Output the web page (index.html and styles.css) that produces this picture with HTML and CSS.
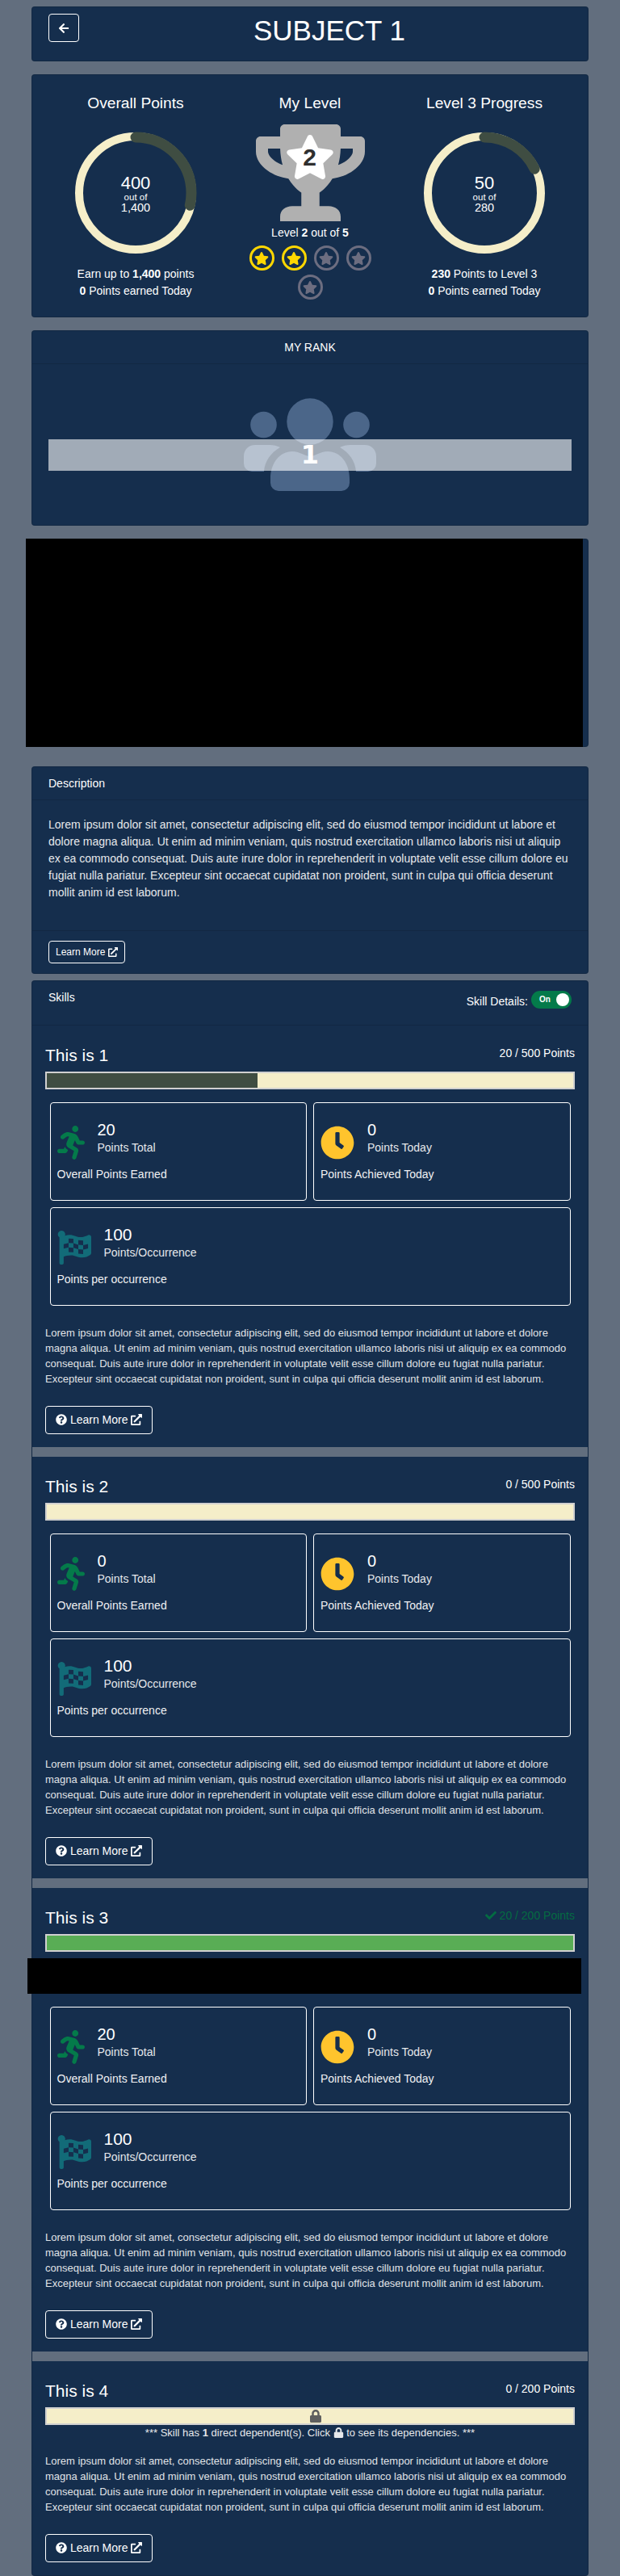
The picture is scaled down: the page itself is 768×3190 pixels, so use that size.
FILE: index.html
```html
<!DOCTYPE html>
<html>
  <head>
    <title>Subject 1</title>
    <link rel="stylesheet" href="styles.css">
  </head>
  <body>
    <svg class="defs">
      <symbol id="i-back" viewBox="0 0 448 512"><path d="M257.5 445.1l-22.2 22.2c-9.4 9.4-24.6 9.4-33.9 0L7 273c-9.4-9.4-9.4-24.6 0-33.9L201.4 44.7c9.4-9.4 24.6-9.4 33.9 0l22.2 22.2c9.5 9.5 9.3 25-.4 34.3L136.6 216H424c13.3 0 24 10.7 24 24v32c0 13.3-10.7 24-24 24H136.6l120.5 114.8c9.8 9.3 10 24.8.4 34.3z"/></symbol>
      <symbol id="i-star" viewBox="0 0 576 512"><path d="M259.3 17.8L194 150.2 47.9 171.5c-26.2 3.8-36.7 36.1-17.7 54.6l105.7 103-25 145.5c-4.5 26.3 23.2 46 46.4 33.7L288 439.6l130.7 68.7c23.2 12.2 50.9-7.4 46.4-33.7l-25-145.5 105.7-103c19-18.5 8.5-50.8-17.7-54.6L382 150.2 316.7 17.8c-11.7-23.6-45.6-24-57.4 0z"/></symbol>
      <symbol id="i-ext" viewBox="0 0 512 512"><path d="M432,320H400a16,16,0,0,0-16,16V448H64V128H208a16,16,0,0,0,16-16V80a16,16,0,0,0-16-16H48A48,48,0,0,0,0,112V464a48,48,0,0,0,48,48H400a48,48,0,0,0,48-48V336A16,16,0,0,0,432,320ZM488,0h-128c-21.37,0-32.05,25.91-17,41l35.73,35.73L135,320.37a24,24,0,0,0,0,34L157.67,377a24,24,0,0,0,34,0L435.28,133.32,471,169c15,15,41,4.5,41-17V24A24,24,0,0,0,488,0Z"/></symbol>
      <symbol id="i-help" viewBox="0 0 512 512"><path d="M504 256c0 136.997-111.043 248-248 248S8 392.997 8 256C8 119.083 119.043 8 256 8s248 111.083 248 248zM262.655 90c-54.497 0-89.255 22.957-116.549 63.758-3.536 5.286-2.353 12.415 2.715 16.258l34.699 26.31c5.205 3.947 12.621 3.008 16.665-2.122 17.864-22.658 30.113-35.797 57.303-35.797 20.429 0 45.698 13.148 45.698 32.958 0 14.976-12.363 22.667-32.534 33.976C247.128 238.528 216 254.941 216 296v4c0 6.627 5.373 12 12 12h56c6.627 0 12-5.373 12-12v-1.333c0-28.462 83.186-29.647 83.186-106.667 0-58.002-60.165-102-116.531-102zM256 338c-25.365 0-46 20.635-46 46 0 25.364 20.635 46 46 46s46-20.636 46-46c0-25.365-20.635-46-46-46z"/></symbol>
      <symbol id="i-run" viewBox="0 0 416 512"><path d="M272 96c26.51 0 48-21.49 48-48S298.51 0 272 0s-48 21.49-48 48 21.49 48 48 48zM113.69 317.47l-14.8 34.52H32c-17.67 0-32 14.33-32 32s14.33 32 32 32h77.45c19.25 0 36.58-11.44 44.11-29.09l8.79-20.52-10.67-6.3c-17.32-10.23-30.06-25.37-37.99-42.61zM384 223.99h-44.03l-26.06-53.25c-12.5-25.55-35.45-44.23-61.78-50.94l-71.08-21.14c-28.3-6.8-57.77-.55-80.84 17.14l-39.67 30.41c-14.03 10.75-16.69 30.83-5.92 44.86s30.84 16.66 44.86 5.92l39.69-30.41c7.67-5.89 17.44-8 25.27-6.14l14.7 4.37-37.46 87.39c-12.62 29.48-1.31 64.01 26.3 80.31l84.98 50.17-27.47 87.73c-5.28 16.86 4.11 34.81 20.97 40.09 3.19 1 6.41 1.48 9.58 1.48 13.61 0 26.23-8.77 30.52-22.45l31.64-101.06c5.91-20.77-2.89-43.08-21.64-54.39l-61.24-36.14 31.31-78.28 20.27 41.43c8 16.34 24.92 26.89 43.11 26.89H384c17.67 0 32-14.33 32-32s-14.33-31.99-32-31.99z"/></symbol>
      <symbol id="i-clock" viewBox="0 0 512 512"><path d="M256,8C119,8,8,119,8,256S119,504,256,504,504,393,504,256,393,8,256,8Zm92.49,313h0l-20,25a16,16,0,0,1-22.49,2.5h0l-67-49.72a40,40,0,0,1-15-31.23V112a16,16,0,0,1,16-16h32a16,16,0,0,1,16,16V256l58,42.5A16,16,0,0,1,348.49,321Z"/></symbol>
      <symbol id="i-flag" viewBox="0 0 512 512"><path fill-rule="evenodd" d="M466.5 66.9c-34.3 15.9-76.5 31.9-117 31.9C296 98.8 251.7 64 184.3 64c-25 0-47.3 4.4-68 12 2.8-7.5 4.1-15.5 3.6-23.6C118.1 24 94.8 1.2 66.3 0 34.3-1.3 8 24.3 8 56c0 19 9.5 35.8 24 45.9V488c0 13.3 10.7 24 24 24h16c13.3 0 24-10.7 24-24v-94.4c28.3-12.1 63.6-22.2 114.4-22.2 53.6 0 97.8 34.8 165.2 34.8 48.2 0 86.7-16.3 122.5-40.9 8.7-6 13.8-15.8 13.8-26.4V95.9c.1-23.3-24.2-38.8-45.4-29zM170 118L243 122V190L170 186zM317 144L390 150V218L317 212zM96 204L170 186V254L96 272zM243 190L317 212V280L243 258zM390 218L464 200V268L390 286zM170 254L243 258V326L170 322zM317 280L390 286V354L317 348z"/></symbol>
      <symbol id="i-lock" viewBox="0 0 448 512"><path d="M400 224h-24v-72C376 68.2 307.8 0 224 0S72 68.2 72 152v72H48c-26.5 0-48 21.5-48 48v192c0 26.5 21.5 48 48 48h352c26.5 0 48-21.5 48-48V272c0-26.5-21.5-48-48-48zm-104 0H152v-72c0-39.7 32.3-72 72-72s72 32.3 72 72v72z"/></symbol>
      <symbol id="i-check" viewBox="0 0 512 512"><path d="M173.898 439.404l-166.4-166.4c-9.997-9.997-9.997-26.206 0-36.204l36.203-36.204c9.997-9.998 26.207-9.998 36.204 0L192 312.69 432.095 72.596c9.997-9.997 26.207-9.997 36.204 0l36.203 36.204c9.997 9.997 9.997 26.206 0 36.204l-294.4 294.401c-9.998 9.997-26.207 9.997-36.204-.001z"/></symbol>
    </svg>

    <div class="card title-card">
      <a class="back-btn"><svg class="ico"><use href="#i-back"/></svg></a>
      <h1>SUBJECT 1</h1>
    </div>

    <div class="card overview">
      <div class="col">
        <h2>Overall Points</h2>
        <div class="ring">
          <svg viewBox="0 0 152 152">
            <circle class="ring-bg" cx="76" cy="76" r="70"/>
            <circle class="ring-val" cx="76" cy="76" r="69" pathLength="100" stroke-dasharray="28.57 100"/>
          </svg>
          <div class="ring-text">
            <span class="ring-num">400</span>
            <span class="ring-of">out of</span>
            <span class="ring-total">1,400</span>
          </div>
        </div>
        <p class="stat">Earn up to <b>1,400</b> points</p>
        <p class="stat"><b>0</b> Points earned Today</p>
      </div>
      <div class="col">
        <h2>My Level</h2>
        <div class="trophy">
          <svg viewBox="0 0 576 512"><path d="M552 64H448V24c0-13.3-10.7-24-24-24H152c-13.3 0-24 10.7-24 24v40H24C10.7 64 0 74.7 0 88v56c0 35.7 22.5 72.4 61.9 100.7 31.5 22.7 69.8 37.1 110 41.7C203.3 338.5 240 360 240 360v72h-48c-35.3 0-64 20.7-64 56v24h320v-24c0-35.3-28.7-56-64-56h-48v-72s36.7-21.5 68.1-73.6c40.3-4.6 78.7-19 110-41.7 39.3-28.3 61.9-65 61.9-100.7V88c0-13.3-10.7-24-24-24zM99.3 192.8C74.9 175.2 64 155.6 64 144v-16h64.2c1 32.6 5.8 61.2 12.8 86.2-15.1-5.2-29.2-12.4-41.7-21.4zM512 144c0 16.1-17.7 36.1-35.3 48.8-12.5 9-26.7 16.2-41.8 21.4 7-25 11.8-53.6 12.8-86.2H512v16z"/></svg>
          <div class="trophy-star">
            <svg class="ico-fill"><use href="#i-star"/></svg>
            <span>2</span>
          </div>
        </div>
        <p class="stat level-line">Level <b>2</b> out of <b>5</b></p>
        <div class="stars">
          <span class="star on"><svg><use href="#i-star"/></svg></span>
          <span class="star on"><svg><use href="#i-star"/></svg></span>
          <span class="star"><svg><use href="#i-star"/></svg></span>
          <span class="star"><svg><use href="#i-star"/></svg></span>
          <span class="star"><svg><use href="#i-star"/></svg></span>
        </div>
      </div>
      <div class="col">
        <h2>Level 3 Progress</h2>
        <div class="ring">
          <svg viewBox="0 0 152 152">
            <circle class="ring-bg" cx="76" cy="76" r="70"/>
            <circle class="ring-val" cx="76" cy="76" r="69" pathLength="100" stroke-dasharray="17.86 100"/>
          </svg>
          <div class="ring-text">
            <span class="ring-num">50</span>
            <span class="ring-of">out of</span>
            <span class="ring-total">280</span>
          </div>
        </div>
        <p class="stat"><b>230</b> Points to Level 3</p>
        <p class="stat"><b>0</b> Points earned Today</p>
      </div>
    </div>

    <div class="card rank-card">
      <div class="card-head center">MY RANK</div>
      <div class="rank-body">
        <svg class="rank-icon" viewBox="0 0 164 115">
          <circle cx="82" cy="29" r="28.7"/>
          <circle cx="24.5" cy="33" r="16.3"/>
          <circle cx="139.5" cy="33" r="16.3"/>
          <path d="M33 105V100C33 80 45 66 60 66C70 66 75 72 82 72C89 72 94 66 104 66C119 66 131 80 131 100V105A10 10 0 0 1 121 115H43A10 10 0 0 1 33 105Z"/>
          <path d="M0 80V72C0 64 6 58 14 58H32C37 58 41 59 45 61C33 68 26 78 25 91H10A10 10 0 0 1 0 81Z"/>
          <path d="M164 80V72C164 64 158 58 150 58H132C127 58 123 59 119 61C131 68 138 78 139 91H154A10 10 0 0 0 164 81Z"/>
        </svg>
        <div class="rank-bar">1</div>
      </div>
    </div>

    <div class="card video-card">
      <div class="video-mask"></div>
    </div>

    <div class="card desc-card">
      <div class="card-head">Description</div>
      <div class="desc-body">Lorem ipsum dolor sit amet, consectetur adipiscing elit, sed do eiusmod tempor incididunt ut labore et dolore magna aliqua. Ut enim ad minim veniam, quis nostrud exercitation ullamco laboris nisi ut aliquip ex ea commodo consequat. Duis aute irure dolor in reprehenderit in voluptate velit esse cillum dolore eu fugiat nulla pariatur. Excepteur sint occaecat cupidatat non proident, sunt in culpa qui officia deserunt mollit anim id est laborum.</div>
      <div class="desc-foot">
        <a class="btn btn-sm">Learn More <svg class="ico"><use href="#i-ext"/></svg></a>
      </div>
    </div>

    <div class="card skills-card">
      <div class="card-head skills-head">
        <span>Skills</span>
        <div class="details">
          <span class="details-label">Skill Details:</span>
          <span class="toggle"><span>On</span><i></i></span>
        </div>
      </div>

      <div class="skill">
        <div class="skill-head"><h3>This is 1</h3><span class="pts">20 / 500 Points</span></div>
        <div class="bar"><div class="bar-fill" style="width: 40%"></div></div>
        <div class="boxes">
          <div class="box">
            <div class="box-row">
              <svg class="box-icon run"><use href="#i-run"/></svg>
              <div><div class="box-num">20</div><div class="box-label">Points Total</div></div>
            </div>
            <div class="box-desc">Overall Points Earned</div>
          </div>
          <div class="box">
            <div class="box-row">
              <svg class="box-icon clock"><use href="#i-clock"/></svg>
              <div><div class="box-num">0</div><div class="box-label">Points Today</div></div>
            </div>
            <div class="box-desc">Points Achieved Today</div>
          </div>
          <div class="box wide">
            <div class="box-row">
              <svg class="box-icon flag"><use href="#i-flag"/></svg>
              <div><div class="box-num big">100</div><div class="box-label">Points/Occurrence</div></div>
            </div>
            <div class="box-desc">Points per occurrence</div>
          </div>
        </div>
        <p class="skill-text">Lorem ipsum dolor sit amet, consectetur adipiscing elit, sed do eiusmod tempor incididunt ut labore et dolore magna aliqua. Ut enim ad minim veniam, quis nostrud exercitation ullamco laboris nisi ut aliquip ex ea commodo consequat. Duis aute irure dolor in reprehenderit in voluptate velit esse cillum dolore eu fugiat nulla pariatur. Excepteur sint occaecat cupidatat non proident, sunt in culpa qui officia deserunt mollit anim id est laborum.</p>
        <a class="btn"><svg class="ico"><use href="#i-help"/></svg> Learn More <svg class="ico"><use href="#i-ext"/></svg></a>
      </div>
      <div class="sep"></div>

      <div class="skill">
        <div class="skill-head"><h3>This is 2</h3><span class="pts">0 / 500 Points</span></div>
        <div class="bar"></div>
        <div class="boxes">
          <div class="box">
            <div class="box-row">
              <svg class="box-icon run"><use href="#i-run"/></svg>
              <div><div class="box-num">0</div><div class="box-label">Points Total</div></div>
            </div>
            <div class="box-desc">Overall Points Earned</div>
          </div>
          <div class="box">
            <div class="box-row">
              <svg class="box-icon clock"><use href="#i-clock"/></svg>
              <div><div class="box-num">0</div><div class="box-label">Points Today</div></div>
            </div>
            <div class="box-desc">Points Achieved Today</div>
          </div>
          <div class="box wide">
            <div class="box-row">
              <svg class="box-icon flag"><use href="#i-flag"/></svg>
              <div><div class="box-num big">100</div><div class="box-label">Points/Occurrence</div></div>
            </div>
            <div class="box-desc">Points per occurrence</div>
          </div>
        </div>
        <p class="skill-text">Lorem ipsum dolor sit amet, consectetur adipiscing elit, sed do eiusmod tempor incididunt ut labore et dolore magna aliqua. Ut enim ad minim veniam, quis nostrud exercitation ullamco laboris nisi ut aliquip ex ea commodo consequat. Duis aute irure dolor in reprehenderit in voluptate velit esse cillum dolore eu fugiat nulla pariatur. Excepteur sint occaecat cupidatat non proident, sunt in culpa qui officia deserunt mollit anim id est laborum.</p>
        <a class="btn"><svg class="ico"><use href="#i-help"/></svg> Learn More <svg class="ico"><use href="#i-ext"/></svg></a>
      </div>
      <div class="sep"></div>

      <div class="skill">
        <div class="skill-head"><h3>This is 3</h3><span class="pts done"><svg class="ico"><use href="#i-check"/></svg> 20 / 200 Points</span></div>
        <div class="bar"><div class="bar-fill full" style="width: 100%"></div></div>
        <div class="skill-mask"></div>
        <div class="boxes">
          <div class="box">
            <div class="box-row">
              <svg class="box-icon run"><use href="#i-run"/></svg>
              <div><div class="box-num">20</div><div class="box-label">Points Total</div></div>
            </div>
            <div class="box-desc">Overall Points Earned</div>
          </div>
          <div class="box">
            <div class="box-row">
              <svg class="box-icon clock"><use href="#i-clock"/></svg>
              <div><div class="box-num">0</div><div class="box-label">Points Today</div></div>
            </div>
            <div class="box-desc">Points Achieved Today</div>
          </div>
          <div class="box wide">
            <div class="box-row">
              <svg class="box-icon flag"><use href="#i-flag"/></svg>
              <div><div class="box-num big">100</div><div class="box-label">Points/Occurrence</div></div>
            </div>
            <div class="box-desc">Points per occurrence</div>
          </div>
        </div>
        <p class="skill-text">Lorem ipsum dolor sit amet, consectetur adipiscing elit, sed do eiusmod tempor incididunt ut labore et dolore magna aliqua. Ut enim ad minim veniam, quis nostrud exercitation ullamco laboris nisi ut aliquip ex ea commodo consequat. Duis aute irure dolor in reprehenderit in voluptate velit esse cillum dolore eu fugiat nulla pariatur. Excepteur sint occaecat cupidatat non proident, sunt in culpa qui officia deserunt mollit anim id est laborum.</p>
        <a class="btn"><svg class="ico"><use href="#i-help"/></svg> Learn More <svg class="ico"><use href="#i-ext"/></svg></a>
      </div>
      <div class="sep"></div>

      <div class="skill">
        <div class="skill-head"><h3>This is 4</h3><span class="pts">0 / 200 Points</span></div>
        <div class="bar locked"><svg class="bar-lock"><use href="#i-lock"/></svg></div>
        <div class="dep-note">*** Skill has <b>1</b> direct dependent(s). Click <svg class="ico"><use href="#i-lock"/></svg> to see its dependencies. ***</div>
        <p class="skill-text">Lorem ipsum dolor sit amet, consectetur adipiscing elit, sed do eiusmod tempor incididunt ut labore et dolore magna aliqua. Ut enim ad minim veniam, quis nostrud exercitation ullamco laboris nisi ut aliquip ex ea commodo consequat. Duis aute irure dolor in reprehenderit in voluptate velit esse cillum dolore eu fugiat nulla pariatur. Excepteur sint occaecat cupidatat non proident, sunt in culpa qui officia deserunt mollit anim id est laborum.</p>
        <a class="btn"><svg class="ico"><use href="#i-help"/></svg> Learn More <svg class="ico"><use href="#i-ext"/></svg></a>
      </div>
    </div>
  </body>
</html>
```

FILE: styles.css
```css
body {
  margin: 0;
  padding: 8px 39px 0;
  background-color: #626e7e;
  color: #fff;
  font-family: 'Liberation Sans', Arial, sans-serif;
  font-size: 14px;
  line-height: 21px;
}
.defs {
  display: none;
}
.ico {
  width: 1em;
  height: 1em;
  fill: currentColor;
  vertical-align: -0.125em;
}
.card {
  background-color: #152e4d;
  border: 1px solid rgba(0, 0, 0, 0.125);
  border-radius: 4px;
  margin-bottom: 16px;
}
.card-head {
  padding: 10px 20px 9px;
  height: 21px;
  border-bottom: 1px solid rgba(0, 0, 0, 0.125);
}
.center {
  text-align: center;
}

/* title */
.title-card {
  display: flex;
  align-items: flex-start;
  padding: 8px 20px 16px;
}
.back-btn {
  width: 36px;
  height: 33px;
  border: 1px solid #fff;
  border-radius: 4px;
  display: flex;
  align-items: center;
  justify-content: center;
}
.title-card h1 {
  flex: 1;
  margin: 0;
  padding-left: 10px;
  font-size: 35px;
  line-height: 42px;
  font-weight: normal;
  text-align: center;
}

/* overview */
.overview {
  display: grid;
  grid-template-columns: repeat(3, 1fr);
  padding: 23px 20px 21px;
  text-align: center;
}
.overview h2 {
  margin: 0;
  font-size: 19.2px;
  line-height: 23px;
  font-weight: normal;
}
.stat {
  margin: 0;
}
.ring {
  position: relative;
  width: 152px;
  height: 152px;
  margin: 24px auto 14px;
}
.ring svg {
  display: block;
  transform: rotate(-90deg);
}
.ring-bg {
  fill: none;
  stroke: #f5eec9;
  stroke-width: 10;
}
.ring-val {
  fill: none;
  stroke: #3f4d42;
  stroke-width: 13;
  stroke-linecap: round;
}
.ring-text {
  position: absolute;
  top: 0;
  left: 0;
  width: 100%;
  height: 100%;
  padding-top: 2px;
  box-sizing: border-box;
  display: flex;
  flex-direction: column;
  justify-content: center;
}
.ring-num {
  font-size: 22px;
  line-height: 22px;
}
.ring-of {
  font-size: 11.5px;
  line-height: 12px;
}
.ring-total {
  font-size: 14.5px;
  line-height: 14px;
}
.trophy {
  position: relative;
  width: 135px;
  height: 120px;
  margin: 15px auto 4px;
  fill: #b0b0b0;
}
.trophy > svg {
  display: block;
}
.trophy-star {
  position: absolute;
  top: 13px;
  left: 36px;
  width: 62px;
  height: 55px;
  fill: #fff;
  color: #2f2f2f;
  font-size: 30px;
  font-weight: bold;
  line-height: 55px;
}
.trophy-star svg {
  position: absolute;
  top: 0;
  left: 0;
  width: 100%;
  height: 100%;
}
.trophy-star span {
  position: relative;
}
.level-line {
  margin-bottom: 5px;
}
.stars {
  width: 180px;
  margin: 0 auto;
  display: flex;
  flex-wrap: wrap;
  justify-content: center;
  row-gap: 5px;
}
.star {
  width: 31px;
  height: 31px;
  margin: 0 4.5px;
  box-sizing: border-box;
  border: 3px solid #6c6d80;
  border-radius: 50%;
  fill: #6c6d80;
  display: flex;
  align-items: center;
  justify-content: center;
}
.star svg {
  width: 18px;
  height: 16px;
}
.star.on {
  border-color: #ffd700;
  fill: #ffd700;
}

/* rank */
.rank-body {
  position: relative;
  height: 199px;
  display: flex;
  align-items: center;
  justify-content: center;
}
.rank-icon {
  width: 164px;
  height: 115px;
  fill: #4b6689;
}
.rank-bar {
  position: absolute;
  top: 93px;
  left: 20px;
  right: 20px;
  height: 39px;
  background: rgba(255, 255, 255, 0.6);
  text-align: center;
  font-family: 'DejaVu Sans', sans-serif;
  font-size: 32px;
  font-weight: bold;
  line-height: 39px;
}

/* video placeholder */
.video-card {
  height: 256px;
  margin-bottom: 24px;
}
.video-mask {
  width: 690px;
  height: 258px;
  margin: -1px 0 0 -8px;
  background: #000;
  position: relative;
}

/* description */
.desc-card {
  margin-bottom: 8px;
}
.desc-body {
  padding: 20px 20px 36px;
  color: #e6e8eb;
  border-bottom: 1px solid rgba(0, 0, 0, 0.125);
}
.desc-foot {
  padding: 12px 20px;
}
.btn {
  display: block;
  width: fit-content;
  border: 1px solid #fff;
  border-radius: 4px;
  padding: 6px 12px;
  line-height: 21px;
}
.btn-sm {
  padding: 4px 8px;
  font-size: 12px;
  line-height: 18px;
}

/* skills */
.skills-card {
  margin-bottom: 0;
}
.skills-head {
  display: flex;
  justify-content: space-between;
  height: 34px;
  padding-bottom: 10px;
}
.details {
  display: flex;
  gap: 4px;
  margin-top: 2px;
}
.details-label {
  margin-top: 3px;
}
.toggle {
  width: 50px;
  height: 22px;
  border-radius: 11px;
  background: #047a4a;
  display: flex;
  justify-content: space-between;
  padding: 3px 3px 3px 10px;
  box-sizing: border-box;
  font-size: 10px;
  font-weight: bold;
  line-height: 15px;
}
.toggle i {
  width: 16px;
  height: 16px;
  border-radius: 50%;
  background: #fff;
}
.skill {
  padding: 24px 16px 16px;
}
.skill-head {
  display: flex;
  justify-content: space-between;
  margin-bottom: 7px;
}
.skill-head h3 {
  margin: 0;
  font-size: 21px;
  line-height: 26px;
  font-weight: normal;
}
.pts.done {
  color: #046b42;
}
.bar {
  height: 22px;
  box-sizing: border-box;
  border: 2px solid #d0d0d0;
  background: #f5eec9;
  margin-bottom: 16px;
}
.bar-fill {
  height: 100%;
  background: #3f4d42;
}
.bar-fill.full {
  background: #59ad55;
}
.bar.locked {
  margin-bottom: 0;
  display: flex;
  justify-content: center;
  padding-left: 13px;
}
.bar-lock {
  width: 14px;
  height: 16px;
  margin-top: 1px;
  fill: #5f5f5f;
}
.skill-mask {
  width: 686px;
  height: 44px;
  margin: -8px 0 16px -22px;
  background: #000;
}
.boxes {
  display: grid;
  grid-template-columns: 1fr 1fr;
  gap: 8px;
  padding: 0 5.5px;
  margin-bottom: 24px;
}
.box {
  height: 122px;
  box-sizing: border-box;
  border: 1px solid #fff;
  border-radius: 4px;
  padding: 21px 8px 0;
}
.box.wide {
  grid-column: 1 / 3;
}
.box-row {
  display: flex;
  gap: 16px;
  height: 49px;
}
.box-icon {
  margin-top: 7px;
  height: 42px;
  flex: none;
}
.run {
  width: 34px;
  fill: #047a4a;
}
.clock {
  width: 42px;
  fill: #ffc42d;
}
.flag {
  width: 42px;
  fill: #126b78;
}
.box-num {
  font-size: 20px;
  line-height: 24px;
}
.box-num.big {
  font-size: 21px;
}
.box-label {
  color: #e6e8eb;
}
.box-desc {
  margin-top: 8px;
  color: #f0f1f3;
}
.skill-text {
  margin: 0 0 24px;
  font-size: 13px;
  line-height: 19px;
  color: #e0e3e7;
}
.sep {
  height: 12px;
  background-color: #626e7e;
}
.dep-note {
  font-size: 13px;
  line-height: 19px;
  text-align: center;
  margin-bottom: 16px;
  color: #e6e8eb;
}
```
